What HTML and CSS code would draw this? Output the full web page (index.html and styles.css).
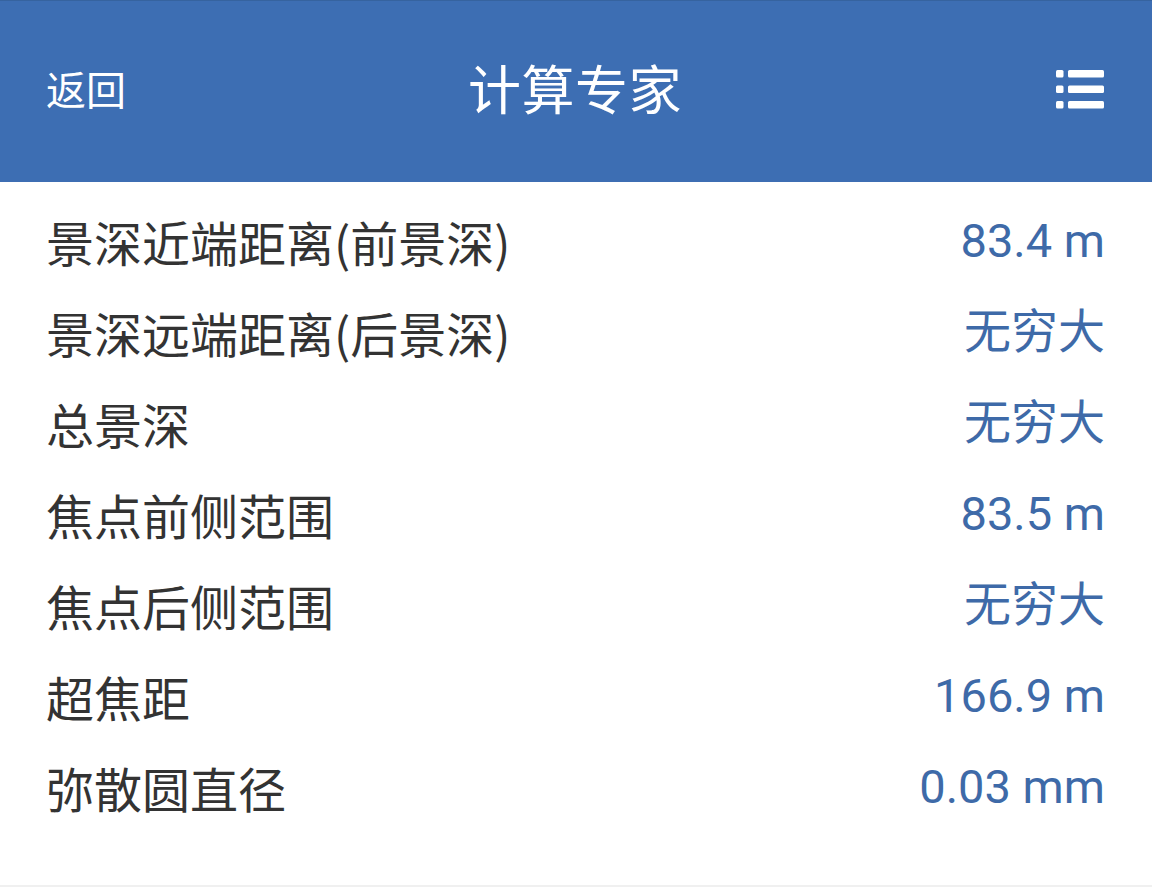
FILE: index.html
```html
<!DOCTYPE html>
<html lang="zh-CN">
<head>
<meta charset="utf-8">
<title>计算专家</title>
<link rel="stylesheet" href="styles.css">
</head>
<body>
<header class="topbar">
  <div class="back">返回</div>
  <div class="title">计算专家</div>
  <div class="menu">
    <svg width="48" height="40" viewBox="0 0 48 40" aria-hidden="true">
      <rect x="0" y="1" width="7.5" height="7.5" rx="1.5" fill="#fff"/>
      <rect x="12" y="1" width="36" height="7.5" rx="1.5" fill="#fff"/>
      <rect x="0" y="16.5" width="7.5" height="7.5" rx="1.5" fill="#fff"/>
      <rect x="12" y="16.5" width="36" height="7.5" rx="1.5" fill="#fff"/>
      <rect x="0" y="32" width="7.5" height="7.5" rx="1.5" fill="#fff"/>
      <rect x="12" y="32" width="36" height="7.5" rx="1.5" fill="#fff"/>
    </svg>
  </div>
</header>
<main class="list">
  <div class="row"><span class="label">景深近端距离(前景深)</span><span class="value">83.4 m</span></div>
  <div class="row"><span class="label">景深远端距离(后景深)</span><span class="value">无穷大</span></div>
  <div class="row"><span class="label">总景深</span><span class="value">无穷大</span></div>
  <div class="row"><span class="label">焦点前侧范围</span><span class="value">83.5 m</span></div>
  <div class="row"><span class="label">焦点后侧范围</span><span class="value">无穷大</span></div>
  <div class="row"><span class="label">超焦距</span><span class="value">166.9 m</span></div>
  <div class="row"><span class="label">弥散圆直径</span><span class="value">0.03 mm</span></div>
</main>
</body>
</html>
```

FILE: styles.css
```css
html, body {
  margin: 0;
  padding: 0;
  background: #ffffff;
}

body {
  font-family: Roboto, "Noto Sans CJK SC", "Noto Sans", sans-serif;
  width: 1152px;
}

.topbar {
  height: 182px;
  background: #3d6eb3;
  border-top: 1px solid #36639f;
  box-sizing: border-box;
  display: grid;
  grid-template-columns: 1fr auto 1fr;
  align-items: center;
  padding: 0 48px 8px 46px;
  color: #ffffff;
}

.back {
  font-family: "Noto Sans CJK SC", sans-serif;
  font-size: 40px;
  line-height: 1;
  justify-self: start;
}

.title {
  font-family: "Noto Sans CJK SC", sans-serif;
  font-size: 53px;
  line-height: 1;
  letter-spacing: 0.5px;
}

.menu {
  justify-self: end;
  display: flex;
  align-items: center;
  padding-top: 2px;
}

.menu svg {
  display: block;
}

.list {
  height: 705px;
  box-sizing: border-box;
  padding: 13px 47px 0 46px;
  border-bottom: 2px solid #f0f0f0;
}

.row {
  height: 91px;
  display: flex;
  align-items: center;
  justify-content: space-between;
}

.label {
  font-family: "Noto Sans CJK SC", sans-serif;
  font-size: 48px;
  line-height: 1;
  color: #333333;
}

.value {
  font-family: Roboto, "Noto Sans CJK SC", sans-serif;
  font-size: 47px;
  line-height: 1;
  color: #3e6aa8;
}
```
